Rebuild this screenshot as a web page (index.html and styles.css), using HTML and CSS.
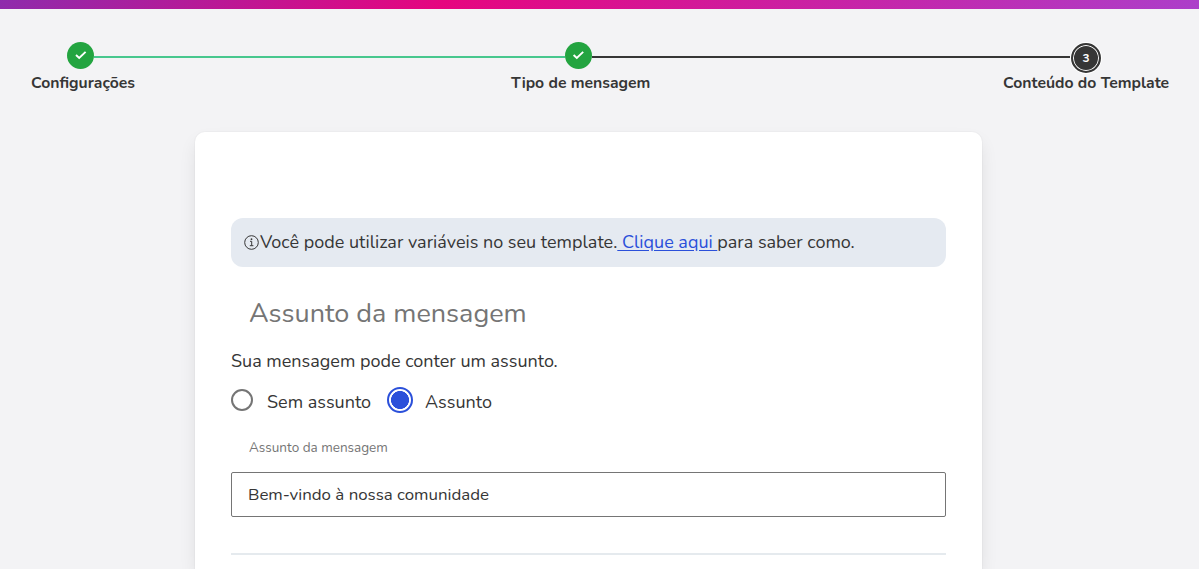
FILE: index.html
```html
<!DOCTYPE html>
<html lang="pt-BR">
<head>
    <meta charset="UTF-8">
    <meta name="viewport" content="width=device-width, initial-scale=1.0">
    <title>Conteúdo do Template</title>
    <link rel="stylesheet" href="styles.css">
</head>
<body>
    <div class="top-bar"></div>

    <div class="stepper">
        <div class="track">
            <span class="step done">
                <svg width="27" height="27" viewBox="0 0 27 27"><path d="M9 13l3.2 3 6.4-6.1"/></svg>
            </span>
            <span class="line line-done"></span>
            <span class="step done">
                <svg width="27" height="27" viewBox="0 0 27 27"><path d="M8.6 13l3.2 3 6.4-6.1"/></svg>
            </span>
            <span class="line"></span>
            <span class="step current">3</span>
        </div>
        <div class="labels">
            <span class="label-first">Configurações</span>
            <span class="label-second">Tipo de mensagem</span>
            <span class="label-third">Conteúdo do Template</span>
        </div>
    </div>

    <main class="card">
        <div class="info">
            <svg class="info-icon" width="15" height="15" viewBox="0 0 15 15">
                <circle cx="7.5" cy="7.5" r="6.8"/>
                <path d="M6 6.3h1.7v4.2M5.8 10.7h3.6"/>
                <circle class="dot" cx="7.5" cy="4.2" r="0.9"/>
            </svg>
            <p class="info-text">Você pode utilizar variáveis no seu template.<a href="#"> Clique aqui </a>para saber como.</p>
        </div>

        <h2 class="title">Assunto da mensagem</h2>
        <p class="description">Sua mensagem pode conter um assunto.</p>

        <div class="options">
            <label class="option">
                <input class="radio" type="radio" name="subject">
                <span class="option-none">Sem assunto</span>
            </label>
            <label class="option">
                <input class="radio" type="radio" name="subject" checked>
                <span class="option-subject">Assunto</span>
            </label>
        </div>

        <label class="field-label" for="subject-text">Assunto da mensagem</label>
        <input class="field" id="subject-text" type="text" value="Bem-vindo à nossa comunidade">
        <hr class="divider">
    </main>
</body>
</html>
```
FILE: styles.css
```css
* {
    box-sizing: border-box;
}

body {
    margin: 0;
    background: #f3f3f5;
    color: #363636;
    font-family: Nunito, Lato, sans-serif;
    font-size: 18px;
}

.top-bar {
    height: 9px;
    background: linear-gradient(135deg, #8e2bac 0%, #e6057f 37%, #ac3fca 100%);
}

/* Steps */
.stepper {
    height: 123px;
    padding-top: 33px;
}

.track {
    display: flex;
    height: 30px;
    padding-left: 67px;
}

.step {
    flex: none;
    display: flex;
    align-items: center;
    justify-content: center;
    width: 27px;
    height: 27px;
    border-radius: 50%;
}

.done {
    background: #23a440;
}

.done path {
    fill: none;
    stroke: #fff;
    stroke-width: 1.9;
}

.current {
    width: 30px;
    height: 30px;
    margin: 1px 0 0 1px;
    background: #363636;
    border: 2px solid #363636;
    box-shadow: inset 0 0 0 1px #fff, 0 0 0 1px #fff;
    color: #fff;
    font-size: 11.8px;
    font-weight: 700;
}

.line {
    width: 478px;
    height: 2px;
    margin-top: 14px;
    background: #363636;
}

.line-done {
    width: 471px;
    background: #48c78e;
}

.labels {
    display: flex;
    padding-left: 31px;
    font-size: 15.75px;
    font-weight: 700;
    line-height: 22px;
    white-space: nowrap;
}

.label-first {
    width: 480px;
}

.label-second {
    width: 492px;
}

/* Content card */
.card {
    width: 787px;
    height: 437px;
    margin-left: 195px;
    padding: 86px 36px 0;
    background: #fff;
    border-radius: 10px 10px 0 0;
    box-shadow: 0 9px 18px -2px rgba(10, 10, 10, 0.1), 0 0 0 1px rgba(10, 10, 10, 0.02);
}

.info {
    display: flex;
    align-items: center;
    gap: 1px;
    height: 49px;
    padding-left: 13px;
    background: #e5eaf1;
    border-radius: 12px;
}

.info-icon {
    fill: none;
    stroke: #363636;
    stroke-width: 1;
}

.dot {
    fill: #363636;
    stroke: none;
}

.info-text {
    margin: 0 0 2px;
    white-space: nowrap;
}

.info-text a {
    color: #2b50da;
    text-underline-offset: 2px;
}

.title {
    margin: 29px 0 0 18px;
    color: #757575;
    font-size: 27px;
    font-weight: 400;
    line-height: 36px;
}

.description {
    margin: 17px 0 0;
    line-height: 24px;
}

.options {
    display: flex;
    align-items: center;
    gap: 16px;
    height: 26px;
    margin-top: 14px;
}

.option {
    display: flex;
    align-items: center;
    line-height: 24px;
}

.option span {
    padding-top: 4px;
}

.radio {
    appearance: none;
    width: 22px;
    height: 22px;
    margin: 0 14px 0 0;
    border: 2px solid #757575;
    border-radius: 50%;
}

.radio:checked {
    width: 26px;
    height: 26px;
    margin-right: 12px;
    border-color: #2b50da;
    background: radial-gradient(circle, #2b50da 8.7px, #fff 9.3px);
}

.field-label {
    display: block;
    margin: 25px 0 0 18px;
    color: #757575;
    font-size: 13.5px;
    line-height: 20px;
}

.field {
    display: block;
    width: 100%;
    height: 45px;
    margin-top: 14px;
    padding: 0 16px;
    border: 1px solid #757575;
    border-radius: 2px;
    color: #363636;
    font-family: inherit;
    font-size: 16.875px;
}

.divider {
    height: 2px;
    margin: 36px 0 0;
    border: 0;
    background: #e5eaee;
}
```
